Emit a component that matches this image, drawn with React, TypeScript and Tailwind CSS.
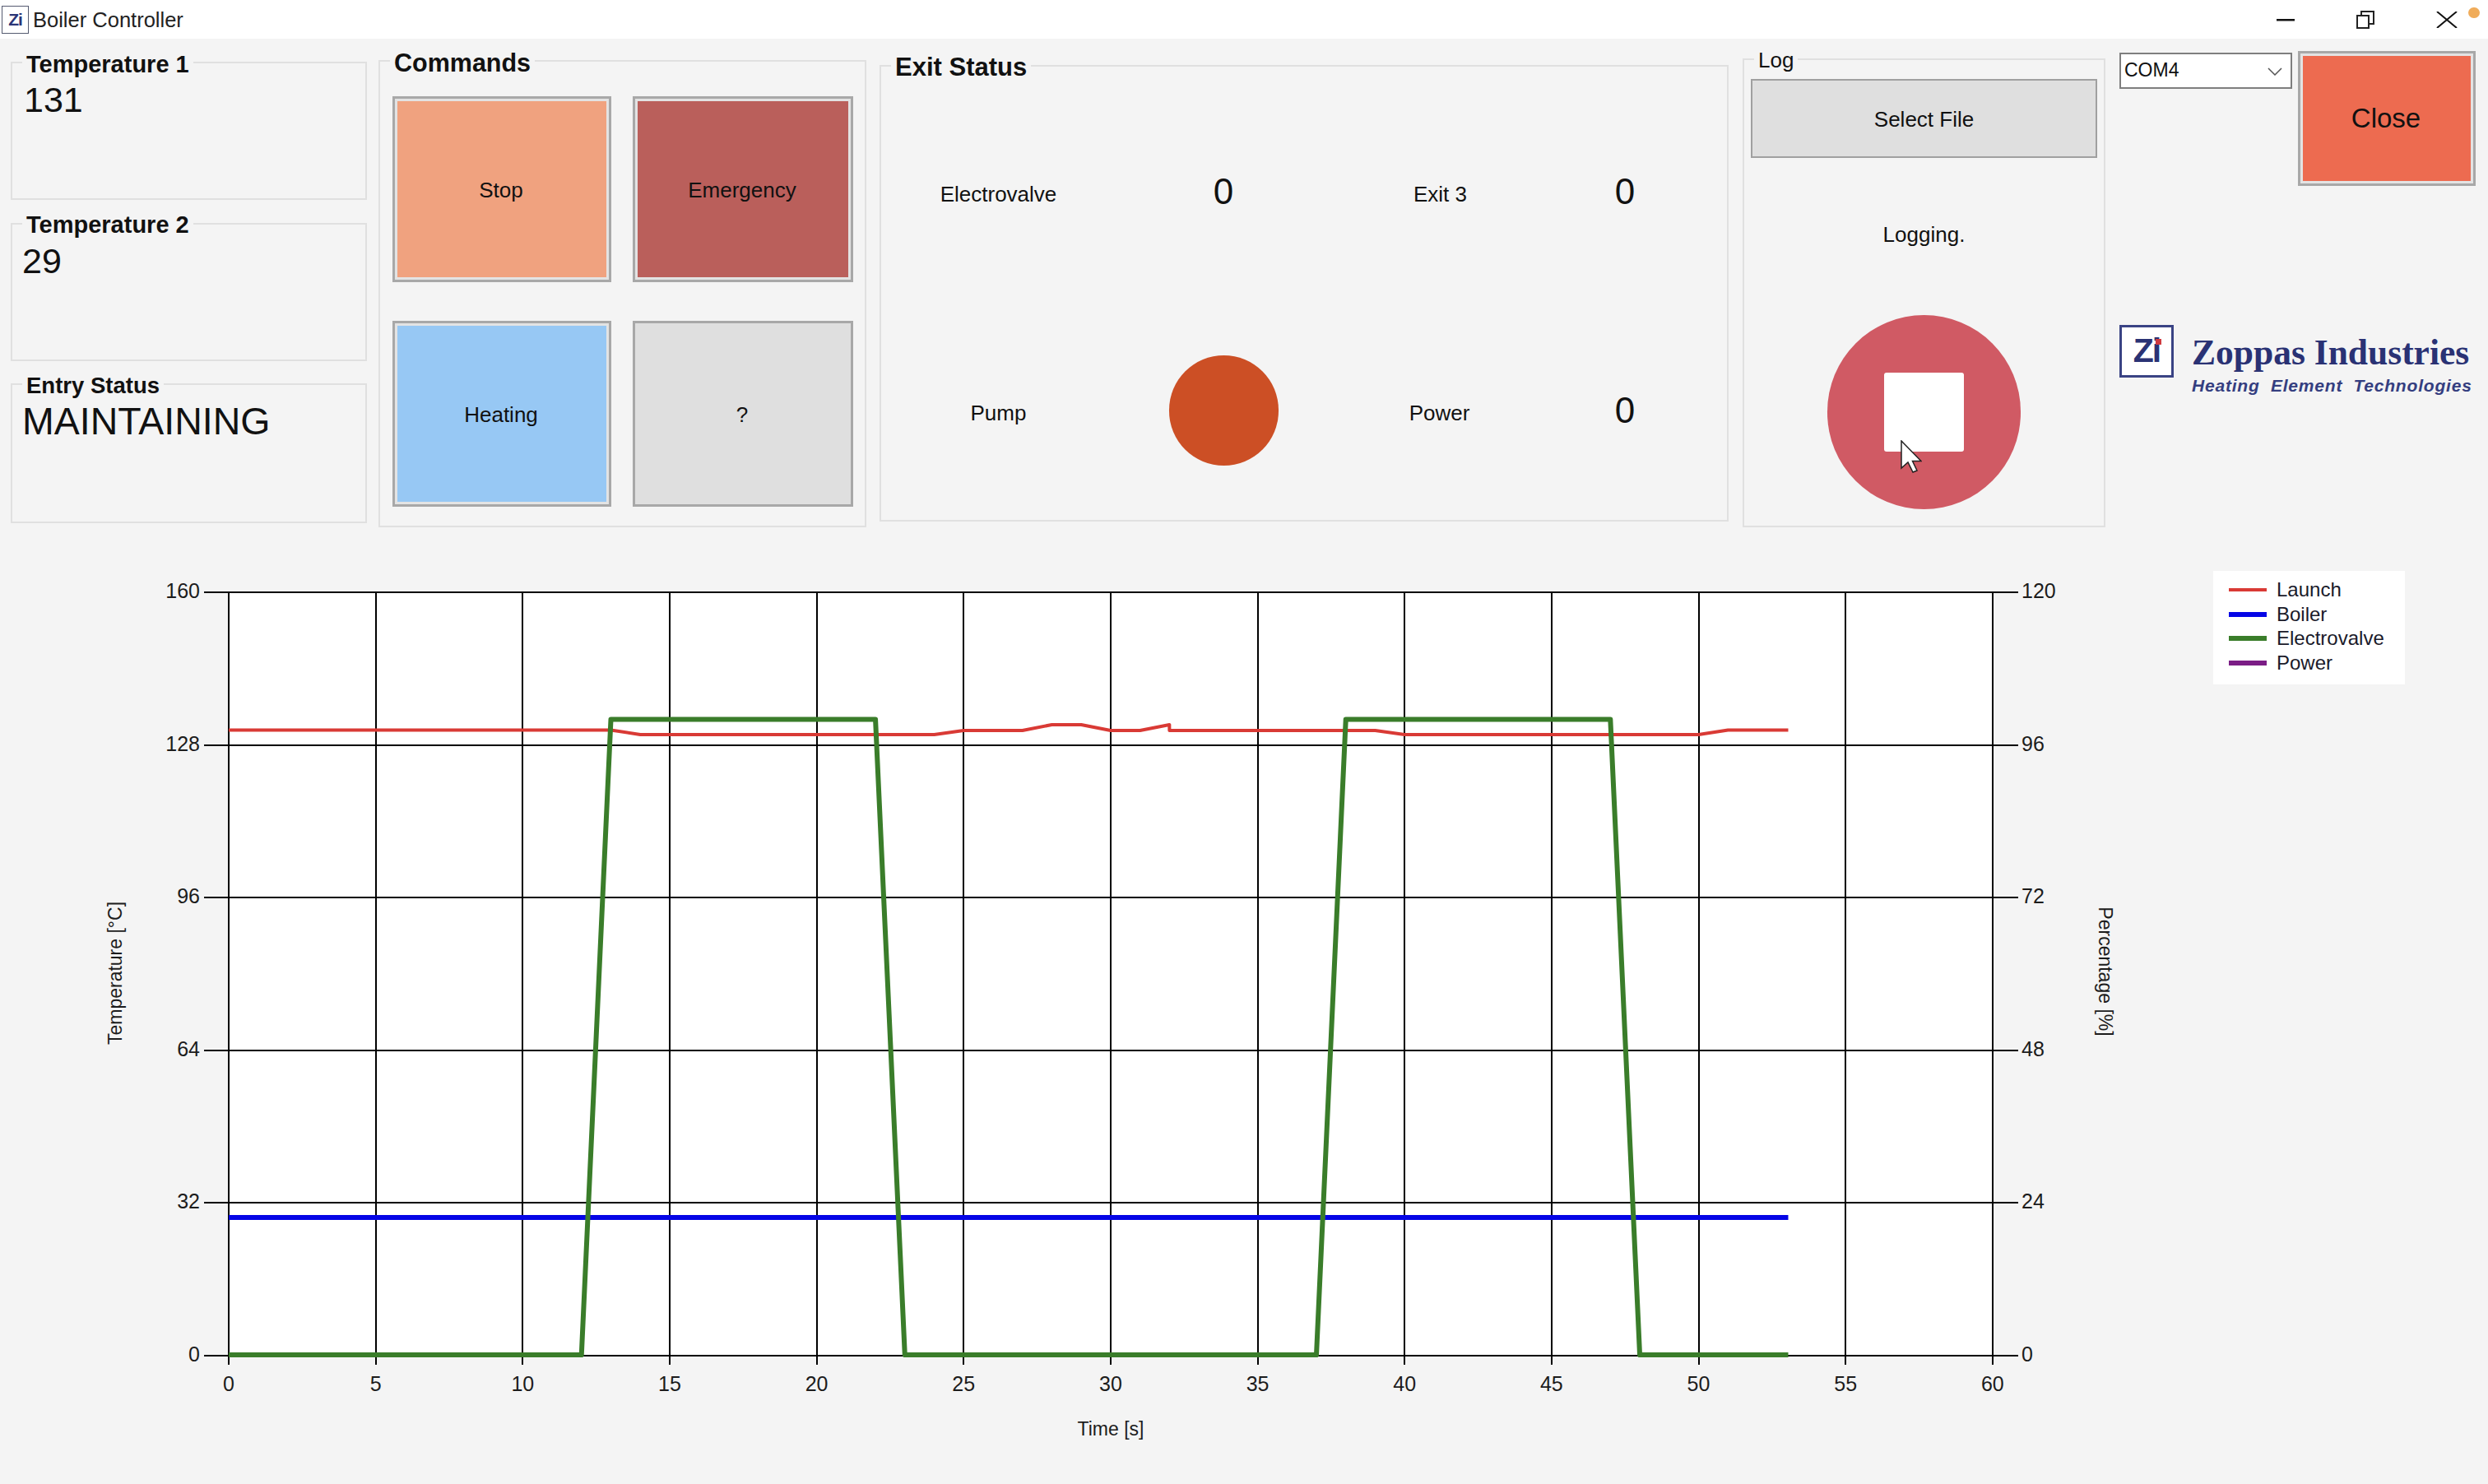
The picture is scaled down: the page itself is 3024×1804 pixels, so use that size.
import type { ReactNode } from "react";

const X0 = 278;
const PER_SEC = 35.73;
const GRID_Y = [720, 905.6, 1091.2, 1276.8, 1462.4, 1648];
const LEFT_LABELS = [160, 128, 96, 64, 32, 0];
const RIGHT_LABELS = [120, 96, 72, 48, 24, 0];
const TOP = 680; // the chart svg starts here on the page

const tx = (t: number) => X0 + t * PER_SEC;
const pts = (rows: number[][]) => rows.map(([t, y]) => `${tx(t)},${y - TOP}`).join(" ");

const launch = [
    [0, 887.5], [13, 887.5], [14, 893], [24, 893], [25, 888], [27, 888], [28, 881], [29, 881], [30, 888],
    [31, 888], [32, 881], [32, 888], [39, 888], [40, 893], [50, 893], [51, 887.5], [53.05, 887.5],
];
const boiler = [[0, 1480], [53.05, 1480]];
const valve = [
    [0, 1647], [12, 1647], [13, 874.5], [22, 874.5], [23, 1647], [37, 1647], [38, 874.5], [47, 874.5], [48, 1647], [53.05, 1647],
];

function GroupBox({ title, className, titleClass, children }: { title: string; className: string; titleClass: string; children?: ReactNode }) {
    return (
        <div className={`relative border-2 border-[#e0e0e0] ${className}`}>
            <span className={`absolute bg-[#f4f4f4] px-[5px] whitespace-nowrap ${titleClass}`}>{title}</span>
            {children}
        </div>
    );
}

function CommandButton({ label, color }: { label: string; color: string }) {
    return (
        <div className="h-[226px] border-[3px] border-[#a8a8a8] bg-[#e3e3e3] p-[3px]">
            <div className={`flex h-full items-center justify-center pr-[2px] pt-[2px] text-[26px] ${color}`}>{label}</div>
        </div>
    );
}

function Chart() {
    return (
        <svg width="2690" height="1124" className="shrink-0">
            <rect x={X0} y={GRID_Y[0] - TOP} width={60 * PER_SEC} height={GRID_Y[5] - GRID_Y[0]} fill="#ffffff" />
            {GRID_Y.map((y, i) => (
                <g key={y}>
                    <line x1="248" x2="2453" y1={y - TOP} y2={y - TOP} stroke="#000000" strokeWidth="2" shapeRendering="crispEdges" />
                    <text x="243" y={y - TOP - 2} textAnchor="end" dominantBaseline="central" className="fill-[#1c1c1c] text-[25px]">{LEFT_LABELS[i]}</text>
                    <text x="2457" y={y - TOP - 2} dominantBaseline="central" className="fill-[#1c1c1c] text-[25px]">{RIGHT_LABELS[i]}</text>
                </g>
            ))}
            {Array.from({ length: 13 }, (_, i) => (
                <g key={i}>
                    <line x1={tx(i * 5)} x2={tx(i * 5)} y1={GRID_Y[0] - TOP} y2={1659 - TOP} stroke="#000000" strokeWidth="2" shapeRendering="crispEdges" />
                    <text x={tx(i * 5)} y={1682 - TOP} textAnchor="middle" dominantBaseline="central" className="fill-[#1c1c1c] text-[25px]">{i * 5}</text>
                </g>
            ))}
            <polyline points={pts(launch)} fill="none" stroke="#d93a35" strokeWidth="4" strokeLinejoin="round" />
            <polyline points={pts(boiler)} fill="none" stroke="#0505e6" strokeWidth="6" />
            <polyline points={pts(valve)} fill="none" stroke="#3a7d2a" strokeWidth="6" strokeLinejoin="round" />
            <text x="1350" y={1737 - TOP} textAnchor="middle" dominantBaseline="central" className="fill-[#1c1c1c] text-[23px]">Time [s]</text>
            <text x="140" y={1183 - TOP} textAnchor="middle" dominantBaseline="central" transform={`rotate(-90 140 ${1183 - TOP})`} className="fill-[#1c1c1c] text-[23px]">Temperature [°C]</text>
            <text x="2559" y={1181 - TOP} textAnchor="middle" dominantBaseline="central" transform={`rotate(90 2559 ${1181 - TOP})`} className="fill-[#1c1c1c] text-[23px]">Percentage [%]</text>
        </svg>
    );
}

export default function App() {
    const legend = [
        { name: "Launch", color: "bg-[#d93a35]", h: "h-[4px]" },
        { name: "Boiler", color: "bg-[#0505e6]", h: "h-[6px]" },
        { name: "Electrovalve", color: "bg-[#3a7d2a]", h: "h-[6px]" },
        { name: "Power", color: "bg-[#7b1d85]", h: "h-[6px]" },
    ];

    return (
        <div className="h-[1804px] w-[3024px] overflow-hidden bg-[#f4f4f4] text-[#111111] [font-family:'Liberation_Sans',Arial,sans-serif]">
            {/* Title bar */}
            <div className="flex h-[47px] items-center bg-white">
                <div className="ml-[2px] flex h-[34px] w-[33px] items-center justify-center border border-[#555b70] text-[21px] font-bold tracking-[-1px] text-[#2b3576]">Zi</div>
                <span className="ml-[5px] mt-[2px] text-[25.500px] leading-none text-[#222222]">Boiler Controller</span>
                <svg width="22" height="4" className="ml-auto">
                    <rect width="22" height="2.5" y="1" fill="#111111" />
                </svg>
                <svg width="22" height="22" className="ml-[75px]" fill="none" stroke="#222222" strokeWidth="2">
                    <rect x="1" y="6" width="14" height="15" />
                    <path d="M6 6V1H21V16H15" />
                </svg>
                <svg width="26" height="20" className="ml-[75px]" stroke="#111111" strokeWidth="2">
                    <path d="M1 0L25 20M25 0L1 20" />
                </svg>
                <div className="mb-[16px] ml-[13px] mr-[10px] h-[13px] w-[14px] rounded-full bg-[#f0ac5a]" />
            </div>

            {/* Top panels */}
            <div className="flex h-[594px] items-start pl-[13px] pt-[15px]">
                <div className="mt-[13px] flex w-[433px] flex-col">
                    <GroupBox title="Temperature 1" className="h-[168px] pl-[14px] pt-[21px]" titleClass="left-[12px] top-[-15px] text-[29px] font-bold leading-[32px]">
                        <div className="text-[43px] leading-[46px]">131</div>
                    </GroupBox>
                    <GroupBox title="Temperature 2" className="mt-[28px] h-[168px] pl-[12px] pt-[21px]" titleClass="left-[12px] top-[-16px] text-[29px] font-bold leading-[32px]">
                        <div className="text-[43px] leading-[46px]">29</div>
                    </GroupBox>
                    <GroupBox title="Entry Status" className="mt-[27px] h-[170px] pl-[12px] pt-[19px]" titleClass="left-[12px] top-[-15px] text-[27.500px] font-bold leading-[32px]">
                        <div className="text-[46.500px] leading-[50px]">MAINTAINING</div>
                    </GroupBox>
                </div>

                <GroupBox title="Commands" className="ml-[14px] mt-[11px] h-[568px] w-[593px] pl-[15px] pt-[42px]" titleClass="left-[12px] top-[-16px] text-[30.500px] font-bold leading-[34px]">
                    <div className="grid w-[560px] grid-cols-[266px_268px] gap-x-[26px] gap-y-[47px]">
                        <CommandButton label="Stop" color="bg-[#f0a27f]" />
                        <CommandButton label="Emergency" color="bg-[#ba5f5b]" />
                        <CommandButton label="Heating" color="bg-[#97c8f4]" />
                        <div className="flex h-[226px] items-center justify-center pr-[2px] pt-[2px] border-[3px] border-[#a8a8a8] bg-[#dfdfdf] text-[26px]">?</div>
                    </div>
                </GroupBox>

                <GroupBox title="Exit Status" className="ml-[16px] mt-[17px] h-[555px] w-[1032px] pt-[85px]" titleClass="left-[12px] top-[-17px] text-[31px] font-bold leading-[36px]">
                    <div className="grid grid-cols-[285px_262px_265px_184px] grid-rows-[134px_134px] items-center justify-items-center gap-y-[132px]">
                        <div className="mt-[7px] text-[26px]">Electrovalve</div>
                        <div className="text-[44px]">0</div>
                        <div className="mt-[7px] text-[26px]">Exit 3</div>
                        <div className="text-[44px]">0</div>
                        <div className="mt-[7px] text-[26px]">Pump</div>
                        <div className="h-[134px] w-[133px] rounded-full bg-[#cc4f25]" />
                        <div className="mr-[2px] mt-[7px] text-[26px]">Power</div>
                        <div className="text-[44px]">0</div>
                    </div>
                </GroupBox>

                <GroupBox title="Log" className="ml-[17px] mt-[9px] flex h-[570px] w-[441px] flex-col items-center pt-[23px]" titleClass="left-[12px] top-[-15px] text-[26px] leading-[30px]">
                    <div className="flex h-[96px] w-[421px] items-center justify-center border-2 border-[#a0a0a0] bg-[#dfdfdf] pt-[2px] text-[26px]">Select File</div>
                    <div className="mt-[78px] text-[26px] leading-[30px]">Logging.</div>
                    <div className="relative mt-[83px] flex h-[236px] w-[235px] items-center justify-center rounded-full bg-[#d05a64]">
                        <div className="h-[96px] w-[97px] rounded-[3px] bg-white" />
                        <svg width="26" height="40" viewBox="0 0 26 40" className="absolute left-[89px] top-[152px]">
                            <path d="M1 1V34L9 27L15 39L20 37L14.500 25.500H25Z" fill="#ffffff" stroke="#222222" strokeWidth="1.500" />
                        </svg>
                    </div>
                </GroupBox>

                <div className="ml-[17px] flex w-[433px] flex-col">
                    <div className="flex items-start">
                        <div className="mt-[2px] flex h-[44px] w-[210px] items-center justify-between border-2 border-[#7f7f7f] bg-white pb-[2px] pl-[4px] pr-[10px] text-[23px]">
                            COM4
                            <svg width="18" height="10" fill="none" stroke="#555555" strokeWidth="1.500" className="mt-[4px]">
                                <path d="M1 1L9 9L17 1" />
                            </svg>
                        </div>
                        <div className="ml-[7px] h-[164px] w-[216px] border-[3px] border-[#a8a8a8] bg-[#e3e3e3] p-[3px]">
                            <div className="flex h-full items-center justify-center bg-[#ed6b50] pr-[2px] text-[33px]">Close</div>
                        </div>
                    </div>
                    {/* Logo */}
                    <div className="mt-[169px] flex items-start">
                        <div className="relative flex h-[64px] w-[66px] shrink-0 items-center justify-center border-[3px] border-[#3a4384] bg-white text-[41px] font-bold tracking-[-2px] text-[#2a3274]">
                            Zi
                            <div className="absolute left-[41px] top-[14px] h-[7px] w-[7px] bg-[#cf3a3f]" />
                        </div>
                        <div className="ml-[22px] mt-[8px] text-[#2a3274]">
                            <div className="text-[43.500px] font-bold leading-[50px] [font-family:'Liberation_Serif',serif]">Zoppas Industries</div>
                            <div className="mt-[5px] whitespace-pre text-[21px] font-bold italic leading-[22px] tracking-[0.800px] text-[#343e80]">Heating  Element  Technologies</div>
                        </div>
                    </div>
                </div>
            </div>

            {/* Chart and legend */}
            <div className="mt-[39px] flex items-start">
                <Chart />
                <div className="mt-[14px] flex h-[138px] w-[233px] flex-col bg-white pl-[19px] pt-[8px]">
                    {legend.map((row) => (
                        <div key={row.name} className="flex h-[29.700px] items-center text-[24px] text-[#1a1a2a]">
                            <div className={`w-[46px] ${row.h} ${row.color}`} />
                            <span className="ml-[12px]">{row.name}</span>
                        </div>
                    ))}
                </div>
            </div>
        </div>
    );
}
